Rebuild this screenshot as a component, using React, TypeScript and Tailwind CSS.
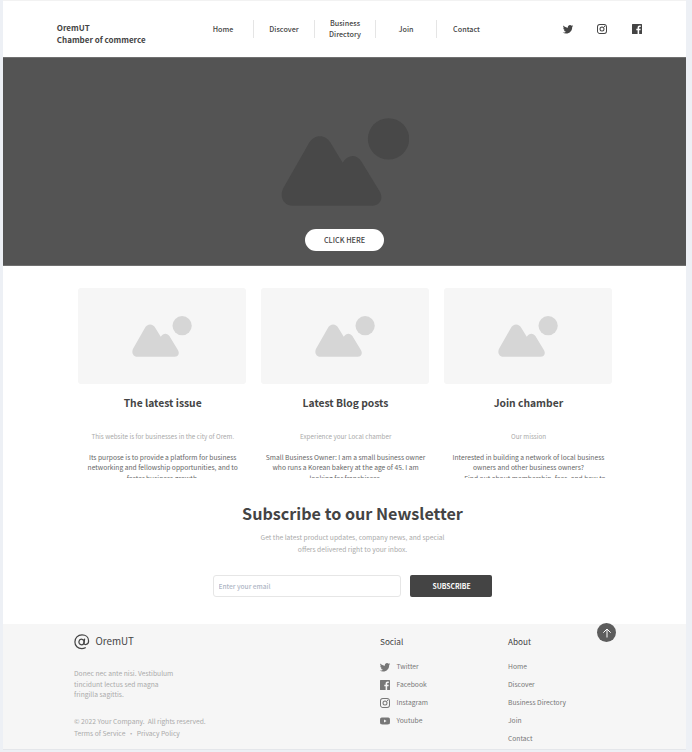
import type { ReactNode } from "react";

const twitter =
  "M22.46,6C21.69,6.35 20.86,6.58 20,6.69C20.88,6.16 21.56,5.32 21.88,4.31C21.05,4.81 20.13,5.16 19.16,5.36C18.37,4.5 17.26,4 16,4C13.65,4 11.73,5.92 11.73,8.29C11.73,8.63 11.77,8.96 11.84,9.27C8.28,9.09 5.11,7.38 3,4.79C2.63,5.42 2.42,6.16 2.42,6.94C2.42,8.43 3.17,9.75 4.33,10.5C3.62,10.5 2.96,10.3 2.38,10V10.03C2.38,12.11 3.86,13.85 5.82,14.24C5.46,14.34 5.08,14.39 4.69,14.39C4.42,14.39 4.15,14.36 3.89,14.31C4.43,16 6,17.26 7.89,17.29C6.43,18.45 4.58,19.13 2.56,19.13C2.22,19.13 1.88,19.11 1.54,19.07C3.44,20.29 5.7,21 8.12,21C16,21 20.33,14.46 20.33,8.79C20.33,8.6 20.33,8.42 20.32,8.23C21.16,7.63 21.88,6.87 22.46,6Z";
const instagram =
  "M7.8,2H16.2C19.4,2 22,4.6 22,7.8V16.2A5.8,5.8 0 0,1 16.2,22H7.8C4.6,22 2,19.4 2,16.2V7.8A5.8,5.8 0 0,1 7.8,2M7.6,4A3.6,3.6 0 0,0 4,7.6V16.4C4,18.39 5.61,20 7.6,20H16.4A3.6,3.6 0 0,0 20,16.4V7.6C20,5.61 18.39,4 16.4,4H7.6M17.25,5.5A1.25,1.25 0 0,1 18.5,6.75A1.25,1.25 0 0,1 17.25,8A1.25,1.25 0 0,1 16,6.75A1.25,1.25 0 0,1 17.25,5.5M12,7A5,5 0 0,1 17,12A5,5 0 0,1 12,17A5,5 0 0,1 7,12A5,5 0 0,1 12,7M12,9A3,3 0 0,0 9,12A3,3 0 0,0 12,15A3,3 0 0,0 15,12A3,3 0 0,0 12,9Z";
const facebook =
  "M3.2,2H20.8A1.2,1.2 0 0,1 22,3.2V20.8A1.2,1.2 0 0,1 20.8,22H16.3V14.5H19L19.4,11.4H16.3V9.5C16.3,8.6 16.6,8 17.9,8H19.5V5.2C19.2,5.2 18.3,5.1 17.1,5.1C14.8,5.1 13.2,6.5 13.2,9.1V11.4H10.6V14.5H13.2V22H3.2A1.2,1.2 0 0,1 2,20.8V3.2A1.2,1.2 0 0,1 3.2,2Z";
const youtube =
  "M10,15L15.19,12L10,9V15M21.56,7.17C21.69,7.64 21.78,8.27 21.84,9.07C21.91,9.87 21.94,10.56 21.94,11.16L22,12C22,14.19 21.84,15.8 21.56,16.83C21.31,17.73 20.73,18.31 19.83,18.56C18.7,18.87 16,19 12,19C8,19 5.3,18.87 4.17,18.56C3.27,18.31 2.69,17.73 2.44,16.83C2.16,15.8 2,14.19 2,12C2,9.81 2.16,8.2 2.44,7.17C2.69,6.27 3.27,5.69 4.17,5.44C5.3,5.13 8,5 12,5C16,5 18.7,5.13 19.83,5.44C20.73,5.69 21.31,6.27 21.56,7.17Z";

function Icon({ path, className }: { path: string; className?: string }) {
  return (
    <svg viewBox="0 0 24 24" className={`size-3 shrink-0 ${className ?? ""}`} fill="currentColor">
      <path d={path} fillRule="evenodd" />
    </svg>
  );
}

function Landscape({ className }: { className: string }) {
  return (
    <svg viewBox="62 53 386 266" className={className} fill="currentColor">
      <path d="M97 318C68 318 54 290 68 264L143 132C160 100 196 100 213 132L247 188C262 162 290 161 304 185L359 275C371 297 360 318 336 318Z" />
      <circle cx="385.5" cy="116" r="62.5" />
    </svg>
  );
}

const nav: ReactNode[] = ["Home", "Discover", <>Business<br />Directory</>, "Join", "Contact"];

const cards = [
  {
    title: "The latest issue",
    lead: "This website is for businesses in the city of Orem.",
    lines: ["Its purpose is to provide a platform for business", "networking and fellowship opportunities, and to", "foster business growth."],
    lastLine: "",
  },
  {
    title: "Latest Blog posts",
    lead: "Experience your Local chamber",
    lines: ["Small Business Owner: I am a small business owner", "who runs a Korean bakery at the age of 45. I am", "looking for franchisees."],
    lastLine: "",
  },
  {
    title: "Join chamber",
    lead: "Our mission",
    lines: ["Interested in building a network of local business", "owners and other business owners?", "Find out about membership, fees, and how to"],
    lastLine: "pl-[13px]",
  },
];

const social = [
  { name: "Twitter", path: twitter },
  { name: "Facebook", path: facebook },
  { name: "Instagram", path: instagram },
  { name: "Youtube", path: youtube },
];

export default function App() {
  return (
    <div className="h-[752px] w-[692px] overflow-hidden bg-[#edf0f5] pl-[3px] font-['Noto_Sans_CJK_SC','Liberation_Sans',sans-serif] text-[#444]">
      <div className="flex h-[750px] w-[683px] flex-col border-b border-[#e4e6ea] bg-white">
        <header className="flex h-[57px] shrink-0 border-t border-[#f2f2f2]">
          <div className="w-[137px] shrink-0 pt-[21px] pl-[53.8px] text-[8px] leading-[12px] font-bold whitespace-nowrap">
            OremUT
            <br />
            Chamber of commerce
          </div>
          <nav className="mt-[19px] ml-[53px] flex h-[18px]">
            {nav.map((n, i) => (
              <div
                key={i}
                className={`flex w-[61px] items-center justify-center text-center text-[7.2px] leading-[11px] font-medium ${i < 4 ? "border-r border-[#e5e5e5]" : "pr-[2px]"}`}
              >
                <span>{n}</span>
              </div>
            ))}
          </nav>
          <div className="mt-[22px] ml-[63.5px] flex gap-[22.7px]">
            <Icon path={twitter} />
            <Icon path={instagram} />
            <Icon path={facebook} />
          </div>
        </header>

        <section className="flex h-[209px] shrink-0 flex-col items-center border-y border-[#707070] bg-[#545454] pt-[60px]">
          <Landscape className="ml-px h-[88px] w-[128.7px] text-[#484848]" />
          <button className="mt-[23px] h-[22px] w-[79px] rounded-full bg-white text-[7.3px] leading-[22px] font-medium">CLICK HERE</button>
        </section>

        <section className="flex h-[212px] shrink-0 gap-[15.2px] overflow-hidden pt-[22px] pl-[75.2px]">
          {cards.map((c) => (
            <article key={c.title} className="w-[167.7px] shrink-0 text-center whitespace-nowrap">
              <div className="flex h-24 items-center justify-center rounded-[3px] bg-[#f6f6f6]">
                <Landscape className="h-[41px] w-[60px] text-[#d6d6d6]" />
              </div>
              <h2 className="mt-3 pl-[1.2px] text-[10.3px] leading-[14px] font-bold">{c.title}</h2>
              <p className="mt-[21px] pl-[1.6px] text-[6.3px] leading-[11px] text-[#aaa]">{c.lead}</p>
              <div className="mt-[10px] pl-[1.4px] text-[6.7px] leading-[10.3px] text-[#666]">
                {c.lines.map((l, i) => (
                  <div key={l} className={i === 2 ? c.lastLine : ""}>{l}</div>
                ))}
              </div>
            </article>
          ))}
        </section>

        <section className="flex h-[146px] shrink-0 flex-col items-center pt-[23px] pl-[16px]">
          <h1 className="text-[16.15px] leading-[24px] font-bold">Subscribe to our Newsletter</h1>
          <p className="mt-[6px] text-center text-[6.73px] leading-[12px] text-[#aaa]">
            Get the latest product updates, company news, and special
            <br />
            offers delivered right to your inbox.
          </p>
          <div className="mt-[20px] mr-px flex gap-[9px]">
            <input
              placeholder="Enter your email"
              className="h-[22px] w-[188px] rounded-[3px] border border-[#e6e6e6] px-[5px] text-[6.6px] font-medium placeholder:font-medium placeholder:text-[#b0b7c6]"
            />
            <button className="h-[22px] w-[82px] rounded-[2px] bg-[#444] pl-[2px] text-[6.8px] font-bold text-white">SUBSCRIBE</button>
          </div>
        </section>

        <footer className="relative flex grow bg-[#f6f6f6] pl-[71px] text-[6.73px] whitespace-nowrap">
          <div className="w-[306px] text-[#aaa]">
            <div className="mt-[10px] flex h-4 items-center gap-[6px] text-[9.8px] text-[#444]">
              <svg viewBox="0 0 24 24" className="size-[15.5px]" fill="none" stroke="currentColor" strokeWidth="1.9" strokeLinecap="round">
                <ellipse cx="11.6" cy="12.4" rx="4" ry="4.3" transform="rotate(12 11.6 12.4)" />
                <path d="M16.4 7.8L15.5 13.8C15 17.8 22.6 17.2 22.6 10.8C22.6 5 18 1.4 12.4 1.4C6 1.4 1.4 6 1.4 12.2C1.4 18.5 6 22.6 12 22.6C14 22.6 16 22.1 17.5 21.2" />
              </svg>
              <span className="-mt-px">OremUT</span>
            </div>
            <p className="mt-[18px] leading-[10.5px]">
              Donec nec ante nisi. Vestibulum
              <br />
              tincidunt lectus sed magna
              <br />
              fringilla sagittis.
            </p>
            <p className="mt-[15px] leading-[12px]">
              © 2022 Your Company.&nbsp; All rights reserved.
              <br />
              Terms of Service<span className="mx-[2.3px]">•</span>Privacy Policy
            </p>
          </div>
          <div className="w-[128px] pt-[11px]">
            <h3 className="-mt-px text-[8.2px] leading-[14px]">Social</h3>
            <ul className="mt-[9px] text-[#777]">
              {social.map((s) => (
                <li key={s.name} className="flex h-[18px] items-center">
                  <Icon path={s.path} className="mt-[2px] mr-[5.5px] -ml-[1px]" />
                  <span>{s.name}</span>
                </li>
              ))}
            </ul>
          </div>
          <div className="pt-[11px]">
            <h3 className="-mt-px text-[8.2px] leading-[14px]">About</h3>
            <ul className="mt-[9px] text-[#777]">
              {["Home", "Discover", "Business Directory", "Join", "Contact"].map((s) => (
                <li key={s} className="h-[18px] leading-[18px]">{s}</li>
              ))}
            </ul>
          </div>
          <div className="absolute top-[-1px] left-[594px] flex size-[19.3px] items-center justify-center rounded-full bg-[#5d5d5d]">
            <svg viewBox="0 0 10 10" className="size-[10px]" fill="none" stroke="white" strokeWidth="1">
              <path d="M5 9.5V1M1.3 4.7L5 1L8.7 4.7" />
            </svg>
          </div>
        </footer>
      </div>
    </div>
  );
}
